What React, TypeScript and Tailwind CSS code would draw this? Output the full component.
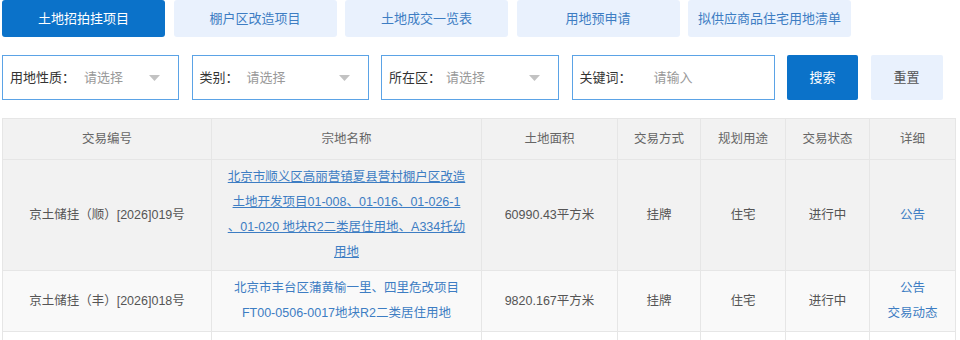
import { ReactNode } from "react";

const tabs = ["土地招拍挂项目", "棚户区改造项目", "土地成交一览表", "用地预申请", "拟供应商品住宅用地清单"];

interface Row {
  code: string;
  name: string[];
  underline: boolean;
  area: string;
  method: string;
  usage: string;
  status: string;
  links: string[];
  bg: string;
}

const rows: Row[] = [
  {
    code: "京土储挂（顺）[2026]019号",
    name: [
      "北京市顺义区高丽营镇夏县营村棚户区改造",
      "土地开发项目01-008、01-016、01-026-1",
      "、01-020 地块R2二类居住用地、A334托幼",
      "用地",
    ],
    underline: true,
    area: "60990.43平方米",
    method: "挂牌",
    usage: "住宅",
    status: "进行中",
    links: ["公告"],
    bg: "bg-[#f2f2f2]",
  },
  {
    code: "京土储挂（丰）[2026]018号",
    name: ["北京市丰台区蒲黄榆一里、四里危改项目", "FT00-0506-0017地块R2二类居住用地"],
    underline: false,
    area: "9820.167平方米",
    method: "挂牌",
    usage: "住宅",
    status: "进行中",
    links: ["公告", "交易动态"],
    bg: "bg-[#f9f9f9]",
  },
];

function Caret() {
  return (
    <svg width="11" height="6" viewBox="0 0 11 6" className="shrink-0">
      <path d="M0 0 L11 0 L5.5 6 Z" fill="#c2c2c2" />
    </svg>
  );
}

function SelectBox({ label, width, gap }: { label: string; width: string; gap: string }) {
  return (
    <div className={`flex h-[45px] ${width} items-center border border-[#5ba3e6] bg-white pl-[7px] pr-[18px]`}>
      <span className="text-[#333]">{label}</span>
      <span className={`${gap} flex-1 text-[#999]`}>请选择</span>
      <Caret />
    </div>
  );
}

function Td({ children, className = "" }: { children: ReactNode; className?: string }) {
  return (
    <td className={`border border-[#e6e6e6] text-center align-middle ${className}`}>{children}</td>
  );
}

export default function App() {
  return (
    <div
      className="h-[340px] w-[960px] overflow-hidden bg-white text-[13px]"
      style={{ fontFamily: '"Liberation Sans", "Noto Sans CJK SC", sans-serif' }}
    >
      {/* Tabs */}
      <div className="flex gap-[8.5px] pl-[2px]">
        {tabs.map((t, i) => (
          <div
            key={t}
            className={`flex h-[37px] w-[163px] items-center justify-center rounded-[3px] ${
              i === 0 ? "bg-[#0b72c9] text-white" : "bg-[#e9f1fd] text-[#3d7dc3]"
            }`}
          >
            {t}
          </div>
        ))}
      </div>

      {/* Filters */}
      <div className="mt-[18px] flex gap-[12.5px] pl-[2px]">
        <SelectBox label="用地性质：" width="w-[177px]" gap="ml-[9px]" />
        <SelectBox label="类别：" width="w-[177px]" gap="ml-[8px]" />
        <SelectBox label="所在区：" width="w-[178px]" gap="ml-[5px]" />
        <div className="flex h-[45px] w-[203px] items-center border border-[#5ba3e6] bg-white pl-[7px]">
          <span className="text-[#333]">关键词：</span>
          <span className="ml-[22px] text-[#999]">请输入</span>
        </div>
        <button className="h-[45px] w-[71px] rounded-[2px] bg-[#0b72c9] text-white">搜索</button>
        <button className="h-[45px] w-[72px] rounded-[2px] bg-[#e9f1fd] text-[#555]">重置</button>
      </div>

      {/* Table */}
      <table className="ml-[2px] mt-[18px] w-[953px] table-fixed border-collapse text-[12.5px] text-[#555]">
        <colgroup>
          <col className="w-[209px]" />
          <col className="w-[270px]" />
          <col className="w-[136px]" />
          <col className="w-[83px]" />
          <col className="w-[85px]" />
          <col className="w-[84px]" />
          <col className="w-[86px]" />
        </colgroup>
        <thead>
          <tr className="h-[41px] bg-[#f2f2f2] text-[#666]">
            {["交易编号", "宗地名称", "土地面积", "交易方式", "规划用途", "交易状态", "详细"].map((h) => (
              <Td key={h} className="font-normal">
                {h}
              </Td>
            ))}
          </tr>
        </thead>
        <tbody>
          {rows.map((r) => (
            <tr key={r.code} className={r.bg}>
              <Td>{r.code}</Td>
              <Td className="px-[10px] py-[5px] leading-[25px]">
                {r.name.map((l) => (
                  <div key={l} className={`whitespace-nowrap text-[#3d7dc3] ${r.underline ? "underline" : ""}`}>
                    {l}
                  </div>
                ))}
              </Td>
              <Td>{r.area}</Td>
              <Td>{r.method}</Td>
              <Td>{r.usage}</Td>
              <Td>{r.status}</Td>
              <Td className="leading-[25px] text-[#3d7dc3]">
                {r.links.map((l) => (
                  <div key={l}>{l}</div>
                ))}
              </Td>
            </tr>
          ))}
          <tr className="h-[40px] bg-white">
            <Td> </Td>
            <Td> </Td>
            <Td> </Td>
            <Td> </Td>
            <Td> </Td>
            <Td> </Td>
            <Td> </Td>
          </tr>
        </tbody>
      </table>
    </div>
  );
}
